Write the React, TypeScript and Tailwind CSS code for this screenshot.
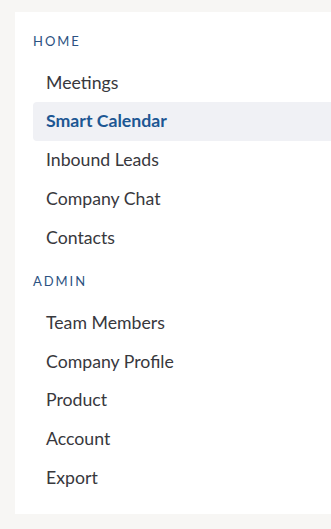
const sections = [
  {
    title: "HOME",
    items: ["Meetings", "Smart Calendar", "Inbound Leads", "Company Chat", "Contacts"],
  },
  {
    title: "ADMIN",
    items: ["Team Members", "Company Profile", "Product", "Account", "Export"],
  },
];

const active = "Smart Calendar";

export default function App() {
  return (
    <div className="min-h-screen bg-[#f7f6f4] pt-3 pl-[15px] font-['Lato',sans-serif]">
      {/* Sidebar card */}
      <nav className="bg-white pt-[21px] pb-[16px] pl-[18px]">
        {sections.map((section, i) => (
          <div key={section.title} className={i > 0 ? "mt-4" : ""}>
            <div className="h-4 leading-4 mb-[14.5px] text-[13px] tracking-[0.15em] text-[#2c5282]">
              {section.title}
            </div>
            <ul>
              {section.items.map((item) => {
                const isActive = item === active;
                return (
                  <li
                    key={item}
                    className={
                      isActive
                        ? "h-[38.75px] flex items-center pl-[13px] bg-[#f0f1f5] rounded-l-sm text-[17.7px] font-bold text-[#1d5793]"
                        : "h-[38.75px] flex items-center pl-[13px] text-[17.7px] text-[#38383d]"
                    }
                  >
                    {item}
                  </li>
                );
              })}
            </ul>
          </div>
        ))}
      </nav>
    </div>
  );
}
